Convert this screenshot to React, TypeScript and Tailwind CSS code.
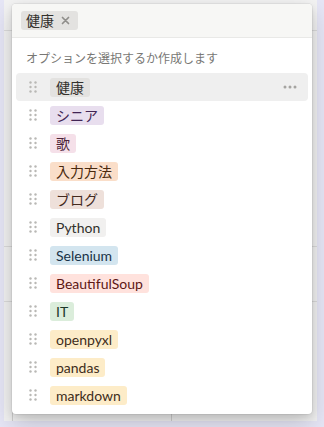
import React from "react";

const tags: { label: string; bg: string; fg: string }[] = [
  { label: "健康", bg: "bg-[#e3e2e0]", fg: "text-[#32302c]" },
  { label: "シニア", bg: "bg-[#e8deee]", fg: "text-[#412454]" },
  { label: "歌", bg: "bg-[#f5e0e9]", fg: "text-[#4c2337]" },
  { label: "入力方法", bg: "bg-[#fadec9]", fg: "text-[#49290e]" },
  { label: "ブログ", bg: "bg-[#eee0da]", fg: "text-[#442a1e]" },
  { label: "Python", bg: "bg-[#f1f0ef]", fg: "text-[#32302c]" },
  { label: "Selenium", bg: "bg-[#d3e5ef]", fg: "text-[#183347]" },
  { label: "BeautifulSoup", bg: "bg-[#ffe2dd]", fg: "text-[#5d1715]" },
  { label: "IT", bg: "bg-[#dbeddb]", fg: "text-[#1c3829]" },
  { label: "openpyxl", bg: "bg-[#fdecc8]", fg: "text-[#402c1b]" },
  { label: "pandas", bg: "bg-[#fdecc8]", fg: "text-[#402c1b]" },
  { label: "markdown", bg: "bg-[#fdecc8]", fg: "text-[#402c1b]" },
];

function Handle() {
  return (
    <svg width="8" height="12" viewBox="0 0 8 12" className="shrink-0">
      {[1.5, 6.5].map((x) =>
        [1.5, 6, 10.5].map((y) => (
          <circle key={`${x}-${y}`} cx={x} cy={y} r="1.2" fill="#b9b8b5" />
        ))
      )}
    </svg>
  );
}

export default function App() {
  return (
    <div
      className="relative w-[324px] h-[427px] overflow-hidden bg-[#e6e6f6] pl-[4px] pr-[7px] pb-[6px]"
      style={{ fontFamily: 'Lato, "Noto Sans CJK JP", sans-serif' }}
    >
      {/* underlying page */}
      <div className="h-full bg-[#f3f3f3] flex flex-col">
        <div className="h-[31px] border-b border-[#dcdcdc]" />
        <div className="h-[216px] border-b border-[#dcdcdc]" />
        <div className="h-[55px] border-b border-[#dcdcdc]" />
        <div className="flex-1 flex flex-col justify-end">
          <div className="h-[20px] flex">
            <div className="w-[9px] border-r border-[#d0d0d0]" />
            <div className="w-[159px] border-r border-[#d0d0d0]" />
          </div>
        </div>
      </div>

      {/* popup menu */}
      <div className="absolute left-[12px] top-[4px] w-[300px] h-[410px] bg-white rounded-[4px] overflow-hidden shadow-[0_0_0_1px_rgba(15,15,15,0.05),0_3px_6px_rgba(15,15,15,0.1),0_9px_24px_rgba(15,15,15,0.2)]">
        <div className="h-[34px] bg-[#f7f7f5] border-b border-[#e9e9e7] flex items-center px-[9px]">
          <div className="h-[19px] flex items-center gap-[7px] pl-[5px] pr-[8px] rounded-[3px] bg-[#e3e2e0] text-[14px] leading-[19px] text-[#32302c]">
            <span>健康</span>
            <svg width="9" height="9" viewBox="0 0 9 9">
              <path d="M1.5 1.5L7.5 7.5M7.5 1.5L1.5 7.5" stroke="#8f8e8a" strokeWidth="1.7" strokeLinecap="round" />
            </svg>
          </div>
        </div>
        <div className="mt-[13px] px-[14px] text-[12px] leading-[16px] text-[#787774]">
          オプションを選択するか作成します
        </div>
        <div className="mt-[6px] flex flex-col">
          {tags.map((t, i) => (
            <div
              key={t.label}
              className={`mx-[4px] h-[28px] flex items-center rounded-[4px] pl-[13px] pr-[11px] ${
                i === 0 ? "bg-[#efefef]" : ""
              }`}
            >
              <Handle />
              <div
                className={`ml-[13px] h-[19px] px-[6px] rounded-[3px] text-[14px] leading-[19px] whitespace-nowrap ${t.bg} ${t.fg}`}
              >
                {t.label}
              </div>
              {i === 0 && (
                <svg className="ml-auto" width="14" height="4" viewBox="0 0 14 4">
                  <circle cx="2" cy="2" r="1.5" fill="#a5a4a1" />
                  <circle cx="7" cy="2" r="1.5" fill="#a5a4a1" />
                  <circle cx="12" cy="2" r="1.5" fill="#a5a4a1" />
                </svg>
              )}
            </div>
          ))}
        </div>
      </div>
    </div>
  );
}
